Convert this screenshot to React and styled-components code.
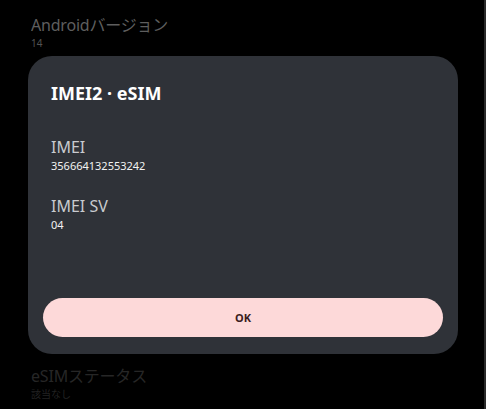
import React from "react";
import styled, { createGlobalStyle } from "styled-components";

const GlobalStyle = createGlobalStyle`
  html, body {
    margin: 0;
    padding: 0;
    background: #000;
  }
  body {
    font-family: "Noto Sans", "Noto Sans CJK JP", sans-serif;
  }
`;

const Screen = styled.div`
  width: 486px;
  height: 409px;
  background: #000;
  box-sizing: border-box;
  border-right: 2px solid #2a2a2a;
  overflow: hidden;
  display: flex;
  flex-direction: column;
`;

const SettingItem = styled.div`
  padding: ${props => props.pad};
  display: flex;
  flex-direction: column;
  gap: 1px;
  opacity: ${props => props.dim};
`;

const ItemTitle = styled.div`
  font-size: 16px;
  line-height: 22px;
  color: #7e7e7e;
  letter-spacing: -0.2px;
`;

const ItemValue = styled.div`
  font-size: 10px;
  line-height: 13px;
  color: #6e6e6e;
`;

const Dialog = styled.div`
  margin: 6px 28px 0 28px;
  width: 430px;
  height: 298px;
  box-sizing: border-box;
  background: #2f3238;
  border-radius: 24px;
  padding: 24px 15px 17px 15px;
  display: flex;
  flex-direction: column;
`;

const DialogTitle = styled.h2`
  margin: 0 0 0 8px;
  font-size: 18px;
  line-height: 26px;
  font-weight: 700;
  color: #fff;
`;

const Field = styled.div`
  margin: ${props => props.top} 0 0 8px;
  display: flex;
  flex-direction: column;
  gap: 2px;
`;

const FieldLabel = styled.div`
  font-size: 16px;
  line-height: 19px;
  color: #c9cbcf;
`;

const FieldValue = styled.div`
  font-size: 11px;
  line-height: 14px;
  color: #f2f2f2;
`;

const OkButton = styled.button`
  margin-top: auto;
  width: 400px;
  height: 39px;
  border: none;
  border-radius: 20px;
  background: #fdd9d9;
  color: #3b1c21;
  font-family: inherit;
  font-size: 11px;
  font-weight: 700;
  cursor: pointer;
`;

export default function App() {
  return (
    <>
      <GlobalStyle />
      <Screen>
        <SettingItem pad="14px 31px 0 31px" dim={0.75}>
          <ItemTitle>Androidバージョン</ItemTitle>
          <ItemValue>14</ItemValue>
        </SettingItem>
        <Dialog>
          <DialogTitle>IMEI2 · eSIM</DialogTitle>
          <Field top="32px">
            <FieldLabel>IMEI</FieldLabel>
            <FieldValue>356664132553242</FieldValue>
          </Field>
          <Field top="24px">
            <FieldLabel>IMEI SV</FieldLabel>
            <FieldValue>04</FieldValue>
          </Field>
          <OkButton>OK</OkButton>
        </Dialog>
        <SettingItem pad="11px 31px 0 31px" dim={0.3}>
          <ItemTitle>eSIMステータス</ItemTitle>
          <ItemValue>該当なし</ItemValue>
        </SettingItem>
      </Screen>
    </>
  );
}
